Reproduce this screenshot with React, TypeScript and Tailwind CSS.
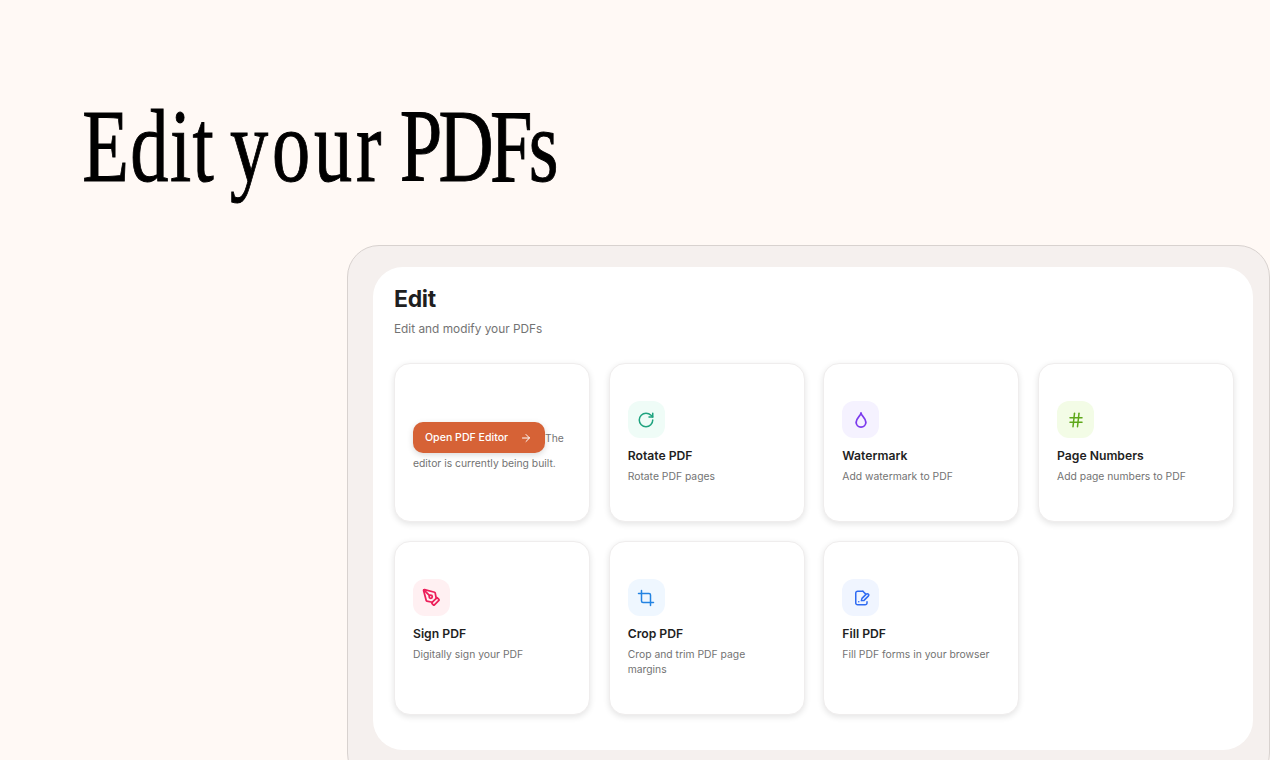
import { ArrowRight, Crop, Hash, PenTool, RotateCw } from "lucide-react";
import type { ReactNode } from "react";

function DropIcon() {
    return (
        <svg width="18" height="18" viewBox="0 0 24 24" fill="none" stroke="currentColor" strokeWidth="2.4" strokeLinecap="round" strokeLinejoin="round">
            <path d="M12 2.5C12 6 18.5 9.5 18.5 15a6.5 6.5 0 0 1-13 0C5.5 9.5 12 6 12 2.5z" />
        </svg>
    );
}

function FillIcon() {
    return (
        <svg width="18" height="18" viewBox="0 0 24 24" fill="none" stroke="currentColor" strokeWidth="2" strokeLinecap="round" strokeLinejoin="round">
            <path d="M14.5 3h-7A2.5 2.5 0 0 0 5 5.5v13A2.5 2.5 0 0 0 7.5 21h10a2.5 2.5 0 0 0 2.5-2.5V17" />
            <path d="M14.5 3L18 6.5" />
            <path d="M12.5 15.5l.8-3 5.7-5.7a1.9 1.9 0 0 1 2.7 2.7l-5.7 5.7z" />
            <path d="M9 17h.01" />
        </svg>
    );
}

type Tool = {
    title: string;
    desc: string;
    icon: ReactNode;
    tint: string;
};

const tools: Tool[] = [
    {
        title: "Rotate PDF",
        desc: "Rotate PDF pages",
        icon: <RotateCw size={18} strokeWidth={2} />,
        tint: "bg-[#effcf7] text-[#1fa37f]",
    },
    {
        title: "Watermark",
        desc: "Add watermark to PDF",
        icon: <DropIcon />,
        tint: "bg-[#f5f2ff] text-[#7c3aed]",
    },
    {
        title: "Page Numbers",
        desc: "Add page numbers to PDF",
        icon: <Hash size={18} strokeWidth={2} />,
        tint: "bg-[#f3fce6] text-[#5fa81a]",
    },
    {
        title: "Sign PDF",
        desc: "Digitally sign your PDF",
        icon: <PenTool size={19} strokeWidth={2.2} />,
        tint: "bg-[#fff0f2] text-[#ec1f5a]",
    },
    {
        title: "Crop PDF",
        desc: "Crop and trim PDF page margins",
        icon: <Crop size={18} strokeWidth={2} />,
        tint: "bg-[#eff7ff] text-[#2383e2]",
    },
    {
        title: "Fill PDF",
        desc: "Fill PDF forms in your browser",
        icon: <FillIcon />,
        tint: "bg-[#f0f5ff] text-[#2f6bf2]",
    },
];

const cardClass =
    "rounded-2xl border border-[#efeded] bg-white px-[18px] py-[37px] shadow-[0_2px_6px_rgba(0,0,0,0.11)]";

export default function App() {
    return (
        <div className="h-[760px] w-[1270px] overflow-hidden bg-[#fff9f5] font-['Inter',sans-serif]">
            <h1 className="h-[245px] origin-top-left scale-x-[0.734] whitespace-nowrap pl-[112px] pt-[86px] font-['Liberation_Serif',serif] text-[104px] leading-[120px] font-normal text-black [word-spacing:-6px] [-webkit-text-stroke:1px_black]">
                <span className="tracking-[2px]">Edit</span>{" "}
                <span className="tracking-[5.2px]">your</span>{" "}
                <span className="tracking-[-5.1px]">PDFs</span>
            </h1>

            <div className="ml-[347px] h-[540px] w-[923px] rounded-[32px] border border-[#d8d2cf] bg-[#f5f0ee] pt-[21px] pl-[25px]">
                <div className="h-[483px] w-[880px] rounded-[30px] bg-white pt-[17px] pr-[19px] pl-[21px]">
                    <h2 className="text-[23px] leading-[30px] font-bold tracking-[-0.3px] text-[#1f1f1f]">Edit</h2>
                    <p className="mt-[6px] text-[11.85px] leading-[18px] text-[#737373]">Edit and modify your PDFs</p>

                    <div className="mt-[25px] grid grid-cols-4 gap-x-[18.7px] gap-y-[19px]">
                        <div className={`${cardClass} flex items-center`}>
                            <p className="mt-[9px] text-[10.35px] leading-[20px] text-[#737373]">
                                <span className="inline-flex h-[31px] w-[132px] items-center justify-between rounded-[10px] bg-[#d66236] pt-[2px] pr-[13px] pl-[12px] align-baseline text-[10.6px] font-medium text-white shadow-[0_2px_6px_rgba(0,0,0,0.15)]">
                                    Open PDF Editor
                                    <ArrowRight size={12} strokeWidth={2} />
                                </span>
                                The editor is currently being built.
                            </p>
                        </div>

                        {tools.map((tool) => (
                            <div key={tool.title} className={cardClass}>
                                <div className={`flex h-[37px] w-[37px] items-center justify-center rounded-xl ${tool.tint}`}>
                                    {tool.icon}
                                </div>
                                <h3 className="mt-[9px] text-[12.2px] leading-[18px] font-semibold text-[#1f1f1f]">{tool.title}</h3>
                                <p className="mt-[4px] text-[10.35px] leading-[15px] text-[#737373]">{tool.desc}</p>
                            </div>
                        ))}
                    </div>
                </div>
            </div>
        </div>
    );
}
